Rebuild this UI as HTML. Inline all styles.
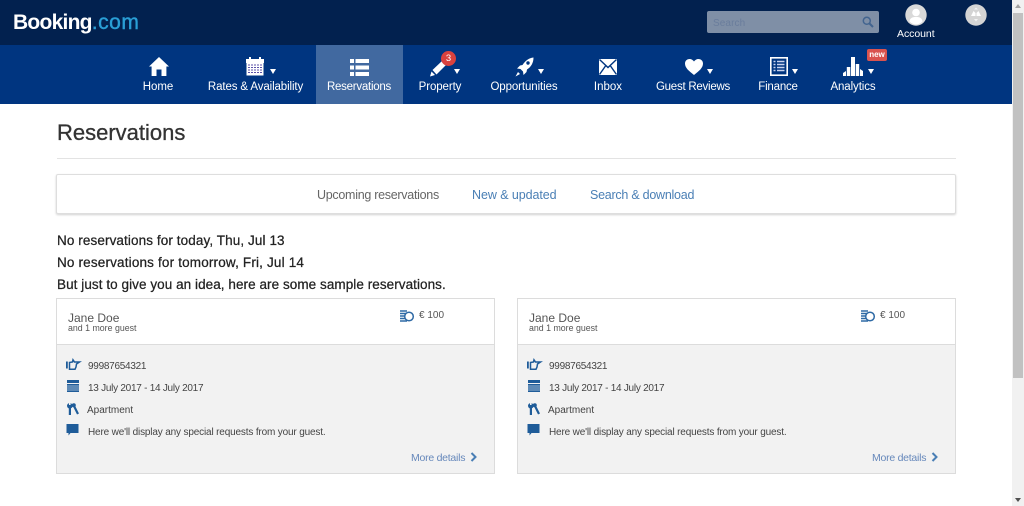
<!DOCTYPE html>
<html><head><meta charset="utf-8"><style>
html,body{margin:0;padding:0;width:1024px;height:506px;overflow:hidden;background:#fff;font-family:"Liberation Sans",sans-serif;}
.a{position:absolute;white-space:nowrap;}
.n{position:absolute;top:80px;color:#fff;font-size:11.5px;line-height:14px;white-space:nowrap;text-align:center;transform:translateX(-50%);}
.t{position:absolute;width:0;height:0;border-left:3px solid transparent;border-right:3px solid transparent;border-top:5px solid #fff;top:69px;}
svg{position:absolute;overflow:visible;}
.card{position:absolute;top:298px;width:437px;height:174px;border:1px solid #dcdcdc;background:#f2f2f2;}
.head{position:absolute;left:0;top:0;width:437px;height:45px;background:#fff;border-bottom:1px solid #dcdcdc;}
.g{position:absolute;font-size:10px;color:#444;line-height:12px;white-space:nowrap;}
</style></head><body>
<div class="a" style="left:0;top:0;width:1012px;height:45px;background:#02214f"></div>
<div class="a" style="left:0;top:45px;width:1012px;height:59px;background:#003580"></div>
<div class="a" style="left:316px;top:45px;width:87px;height:59px;background:#4169a0"></div>
<div class="a" style="left:13px;top:9px;font-size:21px;line-height:27px;font-weight:bold;color:#fff;letter-spacing:-0.75px">Booking<span style="color:#2a9fd6;font-weight:normal;letter-spacing:.55px;-webkit-text-stroke:.4px #2a9fd6">.com</span></div>

<div class="a" style="left:707px;top:11px;width:172px;height:22px;background:#7f8fa6;border-radius:2px"></div>
<div class="a" style="left:713px;top:18px;font-size:10px;line-height:12px;color:#6a7d9c;letter-spacing:.1px">Search</div>
<svg style="left:862px;top:16px" width="12" height="12" viewBox="0 0 12 12"><circle cx="4.8" cy="4.8" r="3.5" fill="none" stroke="#42648f" stroke-width="1.5"/><path d="M7.5 7.5L11 11" stroke="#42648f" stroke-width="2"/></svg>

<svg style="left:905px;top:4px" width="22" height="22" viewBox="0 0 22 22"><circle cx="11" cy="11" r="10.7" fill="#d9d9d9"/><circle cx="11" cy="8.5" r="3.8" fill="#fff"/><path d="M4.5 17.500C5 13.500 8 13 11 13s6 .5 6.500 4.500C15.500 19.500 13 20.500 11 20.500s-4.500-1-6.500-3z" fill="#fff"/></svg>
<div class="a" style="left:897px;top:28px;font-size:10.500px;line-height:13px;color:#fff;letter-spacing:-.05px">Account</div>
<svg style="left:965px;top:4px" width="22" height="22" viewBox="0 0 22 22"><circle cx="11" cy="11" r="10.700" fill="#d4d4d4"/><path d="M6 12l2.500-5 2 2v3zM16 12l-2.500-5-2 2v3z" fill="#fff"/><path d="M9 15h4l-2 2.500zM9 5.500h4L11 3.500z" fill="#f2f2f2"/></svg>

<svg style="left:149px;top:57px" width="20" height="19" viewBox="0 0 20 19"><path d="M10 0L20 9.500h-2.600V19H12.500V12.500H7.500V19H2.600V9.500H0z" fill="#fff"/></svg>
<div class="n" style="left:158px;letter-spacing:-.05px">Home</div>

<svg style="left:246px;top:57px" width="18" height="19" viewBox="0 0 18 19"><path d="M0 2h18v4H0z" fill="#fff"/><rect x="3" y="0" width="2" height="3" fill="#fff"/><rect x="13" y="0" width="2" height="3" fill="#fff"/><rect x=".5" y="6" width="17" height="12.500" fill="#fff"/><path d="M2 8h14M2 10.500h14M2 13h14M2 15.500h14" stroke="#5a52a8" stroke-width="1"/><path d="M4.500 7v10M7.500 7v10M10.500 7v10M13.500 7v10" stroke="#fff" stroke-width="1"/></svg>
<div class="t" style="left:270px"></div>
<div class="n" style="left:255.500px;letter-spacing:-.12px">Rates &amp; Availability</div>

<svg style="left:350px;top:59px" width="19" height="17" viewBox="0 0 19 17"><path d="M0 0h4v4H0zM5.500 0H19v4H5.500zM0 6.500h4v4H0zM5.500 6.500H19v4H5.500zM0 13h4v4H0zM5.500 13H19v4H5.500z" fill="#fff"/></svg>
<div class="n" style="left:359px;letter-spacing:-.25px">Reservations</div>

<svg style="left:430px;top:57px" width="18" height="20" viewBox="0 0 18 20"><path d="M0 19.500l1.500-5 3.500 3.500z" fill="#fff"/><path d="M2.500 13L12 4l4 4-9.500 9.500z" fill="#fff"/></svg>
<div class="a" style="left:441px;top:51px;width:15px;height:15px;border-radius:50%;background:#d9423e;color:#fff;font-size:9.500px;line-height:15px;text-align:center">3</div>
<div class="t" style="left:454px"></div>
<div class="n" style="left:440px;letter-spacing:-.1px">Property</div>

<svg style="left:515px;top:57px" width="19" height="20" viewBox="0 0 19 20"><path d="M18.500.5C14 1 10.500 3.500 7.500 8L5 8.500 2 11.500l3.500.5 2.500 2.500.5 3.500 3-3 .5-2.500C16 10 18.500 6 18.500.5z" fill="#fff"/><circle cx="13" cy="6" r="1.700" fill="#003580"/><path d="M3 15L.5 19.500 5 17z" fill="#fff"/></svg>
<div class="t" style="left:538px"></div>
<div class="n" style="left:524px;letter-spacing:-.1px">Opportunities</div>

<svg style="left:599px;top:59px" width="18" height="16" viewBox="0 0 18 16"><path d="M0 0h18v16H0z" fill="#fff"/><path d="M.5 0.500L9 8.500 17.500 0.500M.5 15.500L6.500 7M17.500 15.500L11.500 7" fill="none" stroke="#003580" stroke-width="1.400"/></svg>
<div class="n" style="left:608px">Inbox</div>

<svg style="left:685px;top:59px" width="18" height="16" viewBox="0 0 18 16"><path d="M9 16C4 12 0 9 0 4.500 0 1.500 2.500 0 4.500 0 6.500 0 8 1 9 2.500 10 1 11.500 0 13.500 0 15.500 0 18 1.500 18 4.500 18 9 14 12 9 16z" fill="#fff"/></svg>
<div class="t" style="left:707px"></div>
<div class="n" style="left:693px;letter-spacing:-.25px">Guest Reviews</div>

<svg style="left:770px;top:57px" width="18" height="19" viewBox="0 0 18 19"><rect x=".8" y=".8" width="16.400" height="17.400" fill="#003580" stroke="#fff" stroke-width="1.600"/><path d="M3.500 4.500h2M7 4.500h7.500M3.500 7.500h2M7 7.500h7.500M3.500 10.500h2M7 10.500h7.500M3.500 13.500h2M7 13.500h7.500" stroke="#c9d3ee" stroke-width="1.400"/></svg>
<div class="t" style="left:792px"></div>
<div class="n" style="left:778px;letter-spacing:-.2px">Finance</div>

<svg style="left:843px;top:57px" width="20" height="19" viewBox="0 0 20 19"><path d="M0 19v-3l3-2v5zM3.800 19V10h3.500v9zM8 19V0h4v19zM12.700 19V7h3.500v12zM17 19v-7l3 2v5z" fill="#fff"/></svg>
<div class="a" style="left:867px;top:49px;width:20px;height:12px;border-radius:2px;background:#d9534f;color:#fff;font-size:8px;line-height:11px;text-align:center;font-weight:bold">new</div>
<div class="t" style="left:868px"></div>
<div class="n" style="left:853px;letter-spacing:-.1px">Analytics</div>

<div class="a" style="left:57px;top:119px;font-size:22px;line-height:27px;color:#333;letter-spacing:0;-webkit-text-stroke:.3px #333">Reservations</div>
<div class="a" style="left:57px;top:158px;width:899px;height:1px;background:#e3e3e3"></div>

<div class="a" style="left:56px;top:174px;width:898px;height:38px;border:1px solid #dedede;border-radius:2px;box-shadow:0 1px 2px rgba(0,0,0,.18);background:#fff"></div>
<div class="a" style="left:317px;top:188px;font-size:12.500px;line-height:14px;color:#666;letter-spacing:-.28px">Upcoming reservations</div>
<div class="a" style="left:472px;top:188px;font-size:12.500px;line-height:14px;color:#4a7fb5;letter-spacing:-.07px">New &amp; updated</div>
<div class="a" style="left:590px;top:188px;font-size:12.500px;line-height:14px;color:#4a7fb5;letter-spacing:-.25px">Search &amp; download</div>

<div class="a" style="left:57px;top:233px;font-size:13.500px;line-height:15px;color:#222;letter-spacing:.1px;-webkit-text-stroke:.25px #222">No reservations for today, Thu, Jul 13</div>
<div class="a" style="left:57px;top:255px;font-size:13.500px;line-height:15px;color:#222;letter-spacing:.17px;-webkit-text-stroke:.25px #222">No reservations for tomorrow, Fri, Jul 14</div>
<div class="a" style="left:57px;top:277px;font-size:13.500px;line-height:15px;color:#222;letter-spacing:.06px;-webkit-text-stroke:.25px #222">But just to give you an idea, here are some sample reservations.</div>

<div class="card" style="left:56px">
<div class="head"></div>
<div class="g" style="left:11px;top:12px;font-size:12px;line-height:15px;color:#555">Jane Doe</div>
<div class="g" style="left:11px;top:23px;font-size:8.800px;color:#555">and 1 more guest</div>
<svg style="left:343px;top:10px" width="14" height="13" viewBox="0 0 14 13"><path d="M0 2h7M0 4.500h7M0 7h6M0 9.500h6M0 12h7" stroke="#2f6aa5" stroke-width="1.600"/><circle cx="9" cy="7.500" r="4.300" fill="#fff" stroke="#2f6aa5" stroke-width="1.500"/></svg>
<div class="g" style="left:362px;top:11px;color:#555">€ 100</div>
<svg style="left:9px;top:60px" width="14" height="12" viewBox="0 0 14 12"><path d="M0 2.500h1.800v7H0z" fill="#1f5c99"/><path d="M3.500 3.500L6.500 3 7 .8 8.500 3H13.500L10.500 5 10 8 9 10.300H3.500z" fill="none" stroke="#1f5c99" stroke-width="1.500"/></svg>
<div class="g" style="left:31px;top:62px;letter-spacing:-.27px">99987654321</div>
<svg style="left:10px;top:80px" width="12" height="13" viewBox="0 0 12 13"><path d="M0 1h12v3H0z" fill="#1f5c99"/><path d="M0 5h12v8H0z" fill="#1f5c99"/><path d="M0 7h12M0 9h12M0 11h12" stroke="#c9d8e8" stroke-width=".7"/></svg>
<div class="g" style="left:31px;top:84px;letter-spacing:-.26px">13 July 2017 - 14 July 2017</div>
<svg style="left:10px;top:104px" width="12" height="12" viewBox="0 0 12 12"><circle cx="2.800" cy="2.800" r="2.800" fill="#1f5c99"/><path d="M2 0h1.600v2H2z" fill="#f2f2f2"/><path d="M1.800 4h2.200v8H1.800z" fill="#1f5c99"/><circle cx="6.800" cy="2.300" r="2" fill="#1f5c99"/><path d="M6.500 2L11 11" stroke="#1f5c99" stroke-width="2.200"/></svg>
<div class="g" style="left:30px;top:106px">Apartment</div>
<svg style="left:9px;top:125px" width="13" height="12" viewBox="0 0 13 12"><path d="M.5 0h12v9H4.500L2.500 11.500V9H.5z" fill="#1f5c99"/></svg>
<div class="g" style="left:31px;top:128px;letter-spacing:-.16px">Here we'll display any special requests from your guest.</div>
<div class="g" style="left:354px;top:153px;color:#6688bb;font-size:10.500px;letter-spacing:-.25px">More details</div>
<svg style="left:413px;top:153px" width="8" height="10" viewBox="0 0 8 10"><path d="M1.500 1L5.500 5 1.500 9" fill="none" stroke="#4a7fb5" stroke-width="2"/></svg>
</div>

<div class="card" style="left:517px">
<div class="head"></div>
<div class="g" style="left:11px;top:12px;font-size:12px;line-height:15px;color:#555">Jane Doe</div>
<div class="g" style="left:11px;top:23px;font-size:8.800px;color:#555">and 1 more guest</div>
<svg style="left:343px;top:10px" width="14" height="13" viewBox="0 0 14 13"><path d="M0 2h7M0 4.500h7M0 7h6M0 9.500h6M0 12h7" stroke="#2f6aa5" stroke-width="1.600"/><circle cx="9" cy="7.500" r="4.300" fill="#fff" stroke="#2f6aa5" stroke-width="1.500"/></svg>
<div class="g" style="left:362px;top:11px;color:#555">€ 100</div>
<svg style="left:9px;top:60px" width="14" height="12" viewBox="0 0 14 12"><path d="M0 2.500h1.800v7H0z" fill="#1f5c99"/><path d="M3.500 3.500L6.500 3 7 .8 8.500 3H13.500L10.500 5 10 8 9 10.300H3.500z" fill="none" stroke="#1f5c99" stroke-width="1.500"/></svg>
<div class="g" style="left:31px;top:62px;letter-spacing:-.27px">99987654321</div>
<svg style="left:10px;top:80px" width="12" height="13" viewBox="0 0 12 13"><path d="M0 1h12v3H0z" fill="#1f5c99"/><path d="M0 5h12v8H0z" fill="#1f5c99"/><path d="M0 7h12M0 9h12M0 11h12" stroke="#c9d8e8" stroke-width=".7"/></svg>
<div class="g" style="left:31px;top:84px;letter-spacing:-.26px">13 July 2017 - 14 July 2017</div>
<svg style="left:10px;top:104px" width="12" height="12" viewBox="0 0 12 12"><circle cx="2.800" cy="2.800" r="2.800" fill="#1f5c99"/><path d="M2 0h1.600v2H2z" fill="#f2f2f2"/><path d="M1.800 4h2.200v8H1.800z" fill="#1f5c99"/><circle cx="6.800" cy="2.300" r="2" fill="#1f5c99"/><path d="M6.500 2L11 11" stroke="#1f5c99" stroke-width="2.200"/></svg>
<div class="g" style="left:30px;top:106px">Apartment</div>
<svg style="left:9px;top:125px" width="13" height="12" viewBox="0 0 13 12"><path d="M.5 0h12v9H4.500L2.500 11.500V9H.5z" fill="#1f5c99"/></svg>
<div class="g" style="left:31px;top:128px;letter-spacing:-.16px">Here we'll display any special requests from your guest.</div>
<div class="g" style="left:354px;top:153px;color:#6688bb;font-size:10.500px;letter-spacing:-.25px">More details</div>
<svg style="left:413px;top:153px" width="8" height="10" viewBox="0 0 8 10"><path d="M1.500 1L5.500 5 1.500 9" fill="none" stroke="#4a7fb5" stroke-width="2"/></svg>
</div>

<div class="a" style="left:1012px;top:0;width:12px;height:506px;background:#f1f1f1"></div>
<div class="a" style="left:1013px;top:13px;width:10px;height:365px;background:#c1c1c1"></div>
<div class="a" style="left:1015px;top:4px;width:0;height:0;border-left:3px solid transparent;border-right:3px solid transparent;border-bottom:4px solid #a3a3a3"></div>
<div class="a" style="left:1015px;top:498px;width:0;height:0;border-left:3px solid transparent;border-right:3px solid transparent;border-top:4px solid #505050"></div>
</body></html>
